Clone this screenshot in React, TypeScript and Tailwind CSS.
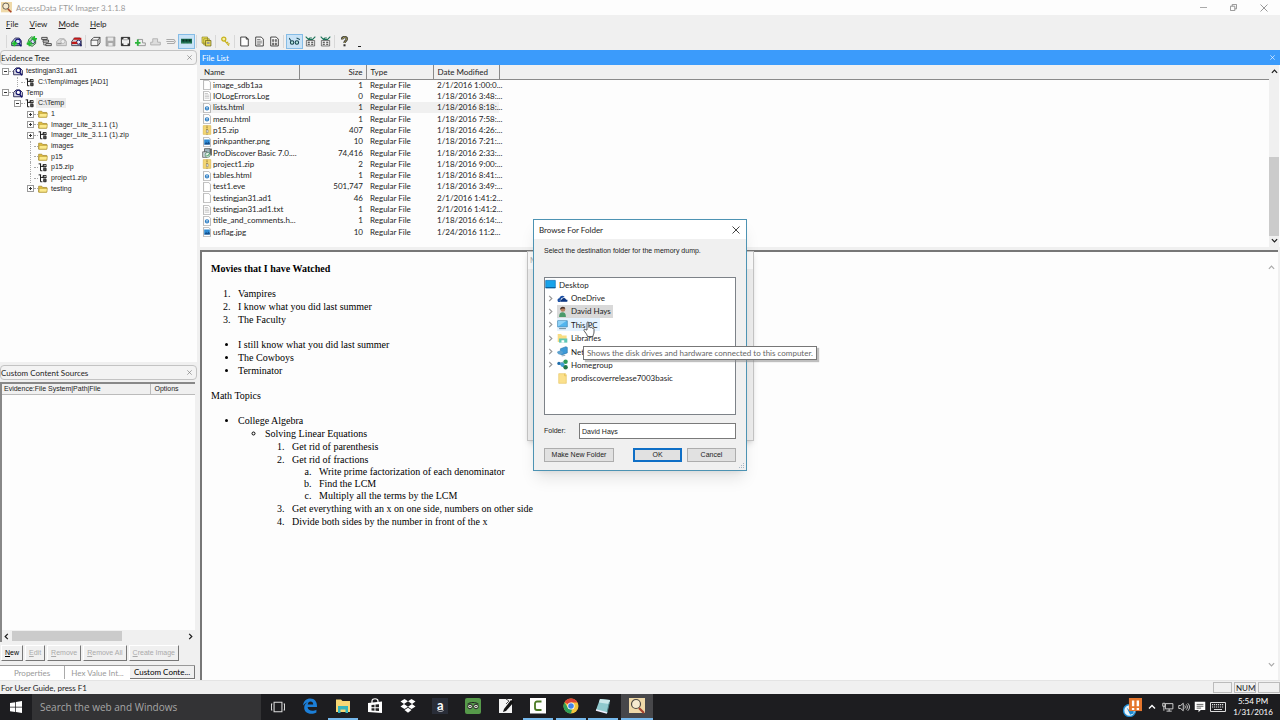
import type { ReactNode } from 'react';
import clsx from 'clsx';

const menus = ['File', 'View', 'Mode', 'Help'];

const files = [
  { icon: 'doc', name: 'image_sdb1aa', size: '1', date: '2/1/2016 1:00:0...' },
  { icon: 'text', name: 'IOLogErrors.Log', size: '0', date: '1/18/2016 3:48:...' },
  { icon: 'html', name: 'lists.html', size: '1', date: '1/18/2016 8:18:...', selected: true },
  { icon: 'html', name: 'menu.html', size: '1', date: '1/18/2016 7:58:...' },
  { icon: 'zip', name: 'p15.zip', size: '407', date: '1/18/2016 4:26:...' },
  { icon: 'image', name: 'pinkpanther.png', size: '10', date: '1/18/2016 7:21:...' },
  { icon: 'setup', name: 'ProDiscover Basic 7.0....', size: '74,416', date: '1/18/2016 2:33:...' },
  { icon: 'zip', name: 'project1.zip', size: '2', date: '1/18/2016 9:00:...' },
  { icon: 'html', name: 'tables.html', size: '1', date: '1/18/2016 8:41:...' },
  { icon: 'doc', name: 'test1.eve', size: '501,747', date: '1/18/2016 3:49:...' },
  { icon: 'doc', name: 'testingjan31.ad1', size: '46', date: '2/1/2016 1:41:2...' },
  { icon: 'text', name: 'testingjan31.ad1.txt', size: '1', date: '2/1/2016 1:41:2...' },
  { icon: 'html', name: 'title_and_comments.h...', size: '1', date: '1/18/2016 6:14:...' },
  { icon: 'image', name: 'usflag.jpg', size: '10', date: '1/24/2016 11:2...' },
];

const evidence = [
  { depth: 0, box: '-', icon: 'evidence', label: 'testingjan31.ad1' },
  { depth: 1, box: '', icon: 'branch', label: 'C:\\Temp\\images [AD1]' },
  { depth: 0, box: '-', icon: 'evidence', label: 'Temp' },
  { depth: 1, box: '-', icon: 'branch', label: 'C:\\Temp', selected: true },
  { depth: 2, box: '+', icon: 'folder', label: '1' },
  { depth: 2, box: '+', icon: 'folder', label: 'Imager_Lite_3.1.1 (1)' },
  { depth: 2, box: '+', icon: 'branch', label: 'Imager_Lite_3.1.1 (1).zip' },
  { depth: 2, box: '', icon: 'folder', label: 'images' },
  { depth: 2, box: '', icon: 'folder', label: 'p15' },
  { depth: 2, box: '', icon: 'branch', label: 'p15.zip' },
  { depth: 2, box: '', icon: 'branch', label: 'project1.zip' },
  { depth: 2, box: '+', icon: 'folder', label: 'testing' },
];

const depthClass = ['pl-[2px]', 'pl-[14px]', 'pl-[27px]'];

const places = [
  { icon: 'onedrive', label: 'OneDrive', open: true },
  { icon: 'user', label: 'David Hays', open: true, selected: true },
  { icon: 'pc', label: 'This PC', open: true, hover: true },
  { icon: 'libraries', label: 'Libraries', open: true },
  { icon: 'network', label: 'Network', open: true },
  { icon: 'homegroup', label: 'Homegroup', open: true },
  { icon: 'plainFolder', label: 'prodiscoverrelease7003basic', open: false },
];

const pageShape = <path d="M2.5.5h8l3 3v12h-11z" fill="#fff" stroke="#8b8b8b" />;

const drawings: Record<string, ReactNode> = {
  /* file types */
  doc: pageShape,
  text: (
    <>
      {pageShape}
      <path d="M4.5 4h5M4.5 6.5h7M4.5 9h7M4.5 11.5h7" stroke="#aaa" />
    </>
  ),
  html: (
    <>
      {pageShape}
      <circle cx="8" cy="8.5" r="2.6" fill="none" stroke="#2f7fc4" strokeWidth="1.8" />
      <path d="M6 8.6h5" stroke="#2f7fc4" strokeWidth="1.2" />
    </>
  ),
  zip: (
    <>
      <path d="M2 1h12v14H2z" fill="#f3d673" stroke="#d9b64c" />
      <path d="M8 1v14" stroke="#8a7434" strokeWidth="2" strokeDasharray="1.5 1.2" />
      <path d="M7 8h3v4H7z" fill="#ddd" stroke="#777" strokeWidth=".6" />
    </>
  ),
  image: (
    <>
      {pageShape}
      <path d="M3.5 4h9v8h-9z" fill="#2c8ad4" />
      <path d="M3.5 12l3-4 2 2 2-3 2 3v2z" fill="#144f8c" />
    </>
  ),
  setup: (
    <>
      <path d="M4 1h9v8H4z" fill="#9fb6bd" stroke="#333" />
      <path d="M1 6h7v9H1z" fill="#c7d3d8" stroke="#444" />
      <path d="M14.500 1v11" stroke="#000" strokeWidth="1.6" />
      <circle cx="9" cy="11" r="4" fill="#e6efe8" stroke="#3b7a58" />
      <path d="M7 11l2 2 3-4" fill="none" stroke="#2f9a57" strokeWidth="1.500" />
    </>
  ),
  /* evidence tree */
  evidence: (
    <>
      <path d="M1 7l4-4h6l4 4v7H1z" fill="#d9d9e6" stroke="#1b1b4d" strokeWidth="1.4" />
      <circle cx="8.500" cy="7" r="3.500" fill="#fff" stroke="#10106a" strokeWidth="1.8" />
      <path d="M10.500 10l4 5" stroke="#10106a" strokeWidth="2.400" />
    </>
  ),
  branch: (
    <>
      <path d="M1 3h4M4 3v11h3M4 7h4" fill="none" stroke="#111" strokeWidth="1.500" />
      <path d="M8 4h5v4H8zM9 10h4v4H9z" fill="#555" stroke="#111" strokeWidth="1.200" />
      <path d="M10 5.500h3" stroke="#fff" />
    </>
  ),
  folder: (
    <>
      <path d="M1 13V3.500h5l1.500 2H14V13z" fill="#e3bf3e" stroke="#94771a" />
      <path d="M1.500 13l.5-6h13l-1 6z" fill="#fbe98c" stroke="#a98a23" strokeWidth=".8" />
    </>
  ),
  /* places in the folder picker */
  desktop: (
    <>
      <path d="M1 2h14v11H1z" fill="#17a3ea" stroke="#0b6fb3" />
      <path d="M1 12.500h14" stroke="#075a95" strokeWidth="1.400" />
    </>
  ),
  onedrive: (
    <>
      <path d="M1 12c-1-3 1-4.500 2.500-4.300C4 4 8.500 2.500 11 5.500L6 8v5H2z" fill="#1b4fa3" />
      <path d="M6 13c-2.500-1-1.500-4 1-4 1-3 5-3 6 0 3 0 3.500 4 1 4z" fill="#0b3580" stroke="#fff" strokeWidth=".6" />
    </>
  ),
  user: (
    <>
      <path d="M3 16c0-5 2-7 5-7s5 2 5 7z" fill="#4a9a6b" />
      <circle cx="8.500" cy="5" r="3.500" fill="#b98262" />
      <path d="M4.500 5c0-5 7.500-5 7.500-1L8 3.500z" fill="#4b3328" />
    </>
  ),
  pc: (
    <>
      <path d="M1 2.500h14v9H1z" fill="#52b5ef" stroke="#4283ae" />
      <path d="M1.500 11l12-8H1.500z" fill="#8fd2f7" />
      <path d="M3 14h10" stroke="#6f8b9c" strokeWidth="1.500" />
    </>
  ),
  libraries: (
    <>
      <path d="M1 1.500h5l1.500 2H14V13H1z" fill="#f8dd83" />
      <path d="M3 8h12v6H3z" fill="#5fc7b4" />
      <path d="M6.500 14v-3.500h4V14z" fill="#fff" />
    </>
  ),
  network: (
    <>
      <path d="M5 4l8-3 2 1v8l-8 3-2-1z" fill="#3d9ad8" stroke="#256c9f" strokeWidth=".8" />
      <path d="M0 9c2-3 6-3 9 0-2 4-7 5-9 0z" fill="#5ea2cf" />
      <path d="M7 14.500l5-1" stroke="#8fa5b5" strokeWidth="1.400" />
    </>
  ),
  homegroup: (
    <>
      <path d="M3 6.500l9-3M3 6.500l9 6" stroke="#2c6d9b" />
      <circle cx="2.800" cy="6.500" r="2.400" fill="#1e6cab" />
      <circle cx="8" cy="8.500" r="3" fill="#3f9fd6" />
      <circle cx="12.500" cy="4" r="3.200" fill="#2c9c58" />
      <circle cx="12.500" cy="12" r="3.200" fill="#237848" />
    </>
  ),
  plainFolder: (
    <>
      <path d="M2.500 1h10l1 2v12h-11z" fill="#fbe08c" stroke="#e8c769" />
      <path d="M11 1v3h2.500" fill="none" stroke="#e2bb52" />
    </>
  ),
  /* toolbar */
  addEvidence: (
    <>
      <path d="M1 9l5-6h6l3 4v7H1z" fill="#c8cfe6" stroke="#23234f" strokeWidth="1.300" />
      <circle cx="10" cy="8" r="3.500" fill="#dfe6ff" stroke="#14147a" strokeWidth="1.600" />
      <path d="M12 11l3 4" stroke="#14147a" strokeWidth="2" />
      <path d="M5 7v8M1 11h8" stroke="#1fc02f" strokeWidth="2.800" />
    </>
  ),
  addAll: (
    <>
      <path d="M4 5l4-4 6 3v7l-5 4-7-3z" fill="#a9d8ac" stroke="#1d6d2a" strokeWidth="1.200" />
      <circle cx="10" cy="8" r="3" fill="#dfe6ff" stroke="#23234f" strokeWidth="1.200" />
      <path d="M5 7v8M1 11h8M12 0v8M8 4h8" stroke="#1fc02f" strokeWidth="2.400" />
    </>
  ),
  mount: (
    <>
      <path d="M1 2h8v3H1zM3 6h8v3H3zM7 11h8v3H7z" fill="#ddd" stroke="#333" strokeWidth="1.200" />
      <path d="M4 9v4h3" fill="none" stroke="#333" />
    </>
  ),
  removeGray: (
    <>
      <path d="M1 8l4-4h7l3 4v6H1z" fill="#ddd" stroke="#aaa" strokeWidth="1.300" />
      <circle cx="10" cy="8" r="3" fill="#eee" stroke="#aaa" />
      <path d="M2 11h6" stroke="#999" strokeWidth="2" />
    </>
  ),
  removeAll: (
    <>
      <path d="M1 8l4-5h8l2 4v7H1z" fill="#ccc" stroke="#33334d" strokeWidth="1.200" />
      <circle cx="11" cy="9" r="3" fill="#eef" stroke="#222266" strokeWidth="1.400" />
      <path d="M1 10h8M4 4h11" stroke="#c01818" strokeWidth="3" />
      <path d="M13 11l2 4" stroke="#222266" strokeWidth="2" />
    </>
  ),
  diskImage: (
    <path d="M1.500 6l4-4h9v8l-3 4h-10zM1.500 6h10M11.500 6v8M14.500 2l-3 4" fill="#f6f6f6" stroke="#333" strokeWidth="1.200" />
  ),
  saveGray: (
    <>
      <path d="M1.500 1.500h13v13h-13z" fill="#aaa" stroke="#999" />
      <path d="M4 2h8v5H4zM5 10h6v4H5z" fill="#e9e9e9" />
    </>
  ),
  film: (
    <>
      <path d="M2 2h12v12H2z" fill="#eee" stroke="#222" strokeWidth="1.400" />
      <path d="M2 2h3v3H2zM11 2h3v3h-3zM2 11h3v3H2zM11 11h3v3h-3z" fill="#333" />
      <path d="M5 5.500h6" stroke="#888" />
    </>
  ),
  exportGreen: (
    <>
      <path d="M4 5h7v5h4v4H4z" fill="#eee" stroke="#888" strokeWidth="1.200" />
      <path d="M4 5v9M0 10h8" stroke="#2bb53a" strokeWidth="2.600" />
    </>
  ),
  exportGray: <path d="M4 4h7v5h4v4H1V9h3z" fill="#ddd" stroke="#aaa" strokeWidth="1.200" />,
  hashGray: <path d="M2 5h11l2 3-2 3H3M2 8h11" fill="none" stroke="#aaa" strokeWidth="1.500" />,
  memory: (
    <>
      <path d="M0 4h16v7H0z" fill="#176b4c" />
      <path d="M2 5h3v3H2zM6.500 5h3v3h-3zM11 5h3v3h-3z" fill="#0b2f25" />
      <path d="M0 10.500h16" stroke="#8ab49a" strokeDasharray="1 1" />
    </>
  ),
  stack: (
    <>
      <path d="M1.500 1.500h8v9h-8zM4 4h8v9H4z" fill="#f3e65b" stroke="#8a8220" />
      <path d="M6.500 6.500h8v8h-8z" fill="#e6d85a" stroke="#5f5911" />
      <path d="M8.500 8.500h4v3h-4z" fill="#999" />
    </>
  ),
  key: (
    <>
      <circle cx="5.500" cy="4.500" r="3" fill="#f7f0a2" stroke="#c7b21d" strokeWidth="1.800" />
      <path d="M7 7l6 7M9 10l3-1M11 12l3-1" stroke="#c7b21d" strokeWidth="1.800" />
    </>
  ),
  page: <path d="M2.500 1.500h8l3 3v10h-11zM10.500 1.500v3h3" fill="#fff" stroke="#222" strokeWidth="1.200" />,
  pageText: (
    <>
      <path d="M2.500 1.500h8l3 3v10h-11z" fill="#fff" stroke="#222" strokeWidth="1.200" />
      <path d="M4.500 5h5M4.500 7.500h7M4.500 10h7M4.500 12h5" stroke="#444" />
    </>
  ),
  pageHex: (
    <>
      <path d="M2.500 1.500h8l3 3v10h-11z" fill="#fff" stroke="#222" strokeWidth="1.200" />
      <path d="M5 5h2v3H5zM9 5h2v3H9zM5 10h2v3H5zM9 10h2v3H9z" fill="#777" stroke="#333" strokeWidth=".6" />
    </>
  ),
  glasses: (
    <>
      <path d="M0 3l3 4M11 3l5 2" stroke="#174c58" strokeWidth="1.500" />
      <circle cx="4.500" cy="9.500" r="2.500" fill="#b7e6e0" stroke="#123f4a" strokeWidth="1.500" />
      <circle cx="11.500" cy="9.500" r="2.500" fill="#b7e6e0" stroke="#123f4a" strokeWidth="1.500" />
    </>
  ),
  glassesText: (
    <>
      <path d="M2 6.500h12v8H2z" fill="#eee" stroke="#444" />
      <path d="M4 9h3M9 9h3M4 12h3M9 12h3" stroke="#333" strokeWidth="1.500" />
      <path d="M1 1l4 4h6l4-4M5 5l2-2h3" fill="none" stroke="#1c7358" strokeWidth="1.600" />
    </>
  ),
  help: (
    <>
      <path d="M4.500 5c0-4.500 7-4.500 7-.5C11.500 7 8 7 8 10" fill="none" stroke="#333" strokeWidth="3.400" />
      <path d="M4.500 5c0-4.500 7-4.500 7-.5C11.500 7 8 7 8 10" fill="none" stroke="#e8d970" strokeWidth="1" />
      <path d="M6.500 12h3v3h-3z" fill="#333" />
    </>
  ),
  magnifier: (
    <>
      <path d="M0 0h16v15H0z" fill="#efd9a8" />
      <circle cx="7" cy="6" r="4.500" fill="#f6ead0" stroke="#4f4a43" strokeWidth="1.200" />
      <path d="M10 10l5 5" stroke="#a7432c" strokeWidth="2.200" />
    </>
  ),
  /* taskbar */
  windows: <path d="M0 2.500l7-1v6H0zM8 1.300L16 0v7.500H8zM0 8.500h7v6l-7-1zM8 8.500h8V16l-8-1.300z" fill="#fff" />,
  taskView: (
    <path d="M3.500 2.500h9v11h-9zM1.500 4.500h-1v7h1M14.500 4.500h1v7h-1" fill="none" stroke="#ddd" strokeWidth="1.200" />
  ),
  edge: (
    <path d="M1 7.500C1.500 3 4.500.5 8.300.5c4.400 0 6.900 3 6.700 8.500H5.600c.2 2.600 2.200 3.800 4.700 3.800 1.500 0 3-.4 4.100-1.100v2.800c-1.500.9-3.200 1.300-5 1.300-4.600 0-7.200-2.600-7.200-6 0-2.400 1.200-4.300 3.500-5.500C3.900 5 2.300 6 1 7.500zM5.700 6.500h5.500c0-1.900-.9-2.900-2.600-2.900-1.600 0-2.600 1.100-2.900 2.900z" fill="#1c7fd8" fillRule="evenodd" />
  ),
  explorer: (
    <>
      <path d="M1 1.500h5l1.500 1.500H15v11H1z" fill="#f7d774" />
      <path d="M3 8h10v7h-2.500v-3.500h-5V15H3z" fill="#35b5bc" />
    </>
  ),
  store: (
    <>
      <path d="M1 5l14-1.500V15L1 14z" fill="#fff" />
      <path d="M5 5V3c0-3 6-3 6 0v1.500" fill="none" stroke="#fff" strokeWidth="1.200" />
      <path d="M4.500 7l3-.3v2.600h-3zM8.500 6.600l3.500-.3v3H8.500zM4.500 10.200h3v2.600l-3-.2zM8.500 10.200H12v2.900l-3.500-.3z" fill="#222" />
    </>
  ),
  dropbox: (
    <path d="M4.500 1L8 3.300 4 6 .5 3.500zM11.500 1L8 3.300 12 6l3.500-2.500zM.5 8.500L4 6l4 2.700L4.500 11zM15.500 8.500L12 6 8 8.700l3.500 2.300zM4.500 12L8 9.700l3.500 2.300L8 14.700z" fill="#fff" />
  ),
  tripadvisor: (
    <>
      <rect width="16" height="16" rx="2" fill="#56994a" />
      <path d="M2.500 6c3-2 8-2 11 0" fill="none" stroke="#222" />
      <circle cx="5" cy="8.500" r="2.300" fill="#e8efdf" stroke="#222" />
      <circle cx="11" cy="8.500" r="2.300" fill="#e8efdf" stroke="#222" />
      <circle cx="5" cy="8.500" r=".8" fill="#222" />
      <circle cx="11" cy="8.500" r=".8" fill="#222" />
    </>
  ),
  inkpad: (
    <>
      <path d="M1 1h13v14H1z" fill="#f3f3f3" />
      <path d="M6 11l7-9 3 2-8 9-3 1z" fill="#111" />
      <path d="M8 1l3 2-3 3" fill="none" stroke="#555" />
    </>
  ),
  camtasia: (
    <>
      <path d="M0 0h16v15.500H0z" fill="#fff" />
      <path d="M11.500 3.500H7a2 2 0 00-2 2v4.500a2 2 0 002 2h4.500" fill="none" stroke="#4a7a22" strokeWidth="1.800" />
    </>
  ),
  chrome: (
    <>
      <circle cx="8" cy="8" r="7.500" fill="#f2c53c" />
      <path d="M8 8L1.500 4.200A7.500 7.500 0 0114.500 4.500H8z" fill="#dc4437" />
      <path d="M8 15.500A7.500 7.500 0 011.500 4.200L5 10l4 1.500z" fill="#2f9e58" />
      <circle cx="8" cy="8" r="3.600" fill="#fff" />
      <circle cx="8" cy="8" r="2.800" fill="#4285e8" />
    </>
  ),
  notepad: (
    <>
      <path d="M5 1l10 1-3 13-11-3z" fill="#8fc9cd" />
      <path d="M5 1l10 1-1 4L4 4.500z" fill="#cbe8ea" />
      <path d="M12 15l2.500-11" stroke="#4d7f84" />
      <path d="M1 12l11 3" stroke="#eef" strokeWidth="1.500" />
    </>
  ),
  tray: (
    <>
      <circle cx="5.500" cy="10.500" r="5" fill="#e9f4fb" stroke="#1f8bd0" strokeWidth="1.200" />
      <path d="M3 8l3 3h3v2l-3 1z" fill="#1f8bd0" />
      <path d="M5 0h11v11H5z" fill="#e5762d" />
      <path d="M8.500 2v5M12.500 2v5M8.500 8.500v1.500M12.500 8.500v1.500" stroke="#fff" strokeWidth="2" />
    </>
  ),
  wired: (
    <>
      <path d="M4.500 3.500h10v7h-10zM9.500 10.500v3M6 13.500h7" fill="none" stroke="#ddd" strokeWidth="1.200" />
      <path d="M1 3h3v4H1zM2.500 7v6" fill="#222" stroke="#ddd" strokeWidth="1.200" />
    </>
  ),
  volume: (
    <>
      <path d="M1 6h2.500L7 3v10L3.500 10H1z" fill="none" stroke="#ddd" strokeWidth="1.200" />
      <path d="M9 6c1 1 1 3 0 4M11 4.500c2 2 2 5 0 7M13 3c3 3 3 7 0 10" fill="none" stroke="#ddd" strokeWidth="1.200" />
    </>
  ),
  message: (
    <>
      <path d="M1 1h14v11H9l-3 3v-3H1z" fill="#fff" />
      <path d="M3.500 4.500h9M3.500 7h9M3.500 9.500h6" stroke="#333" />
    </>
  ),
  keyboard: (
    <>
      <path d="M.5 3.500h15v9H.5z" fill="none" stroke="#ddd" />
      <path d="M2 5.700h12M2 8h12" stroke="#ddd" strokeWidth="1.200" strokeDasharray="1.200 .8" />
      <path d="M4 10.500h8" stroke="#ddd" />
    </>
  ),
};

function Icon({ name, className = 'size-[11px]' }: { name: string; className?: string }) {
  return (
    <svg viewBox="0 0 16 16" className={clsx('shrink-0', className)} aria-hidden="true">
      {drawings[name]}
    </svg>
  );
}

function Chevron({ dir, className }: { dir: 'up' | 'down' | 'left' | 'right'; className?: string }) {
  const paths = { up: 'M1 5.500l3-3 3 3', down: 'M1 2.500l3 3 3-3', left: 'M5.500 1l-3 3 3 3', right: 'M2.500 1l3 3-3 3' };
  return (
    <svg viewBox="0 0 8 8" className={clsx('size-[7px] shrink-0', className)} aria-hidden="true">
      <path d={paths[dir]} fill="none" stroke="currentColor" strokeWidth="1.400" />
    </svg>
  );
}

function Cross({ className }: { className?: string }) {
  return (
    <svg viewBox="0 0 8 8" className={clsx('shrink-0', className)} aria-hidden="true">
      <path d="M.5.5l7 7M7.500.5l-7 7" stroke="currentColor" strokeWidth="1" />
    </svg>
  );
}

export default function App() {
  return (
    <div className="relative flex h-screen flex-col overflow-hidden bg-[#f0f0f0] font-['Lato',sans-serif] text-[8px] leading-3 text-[#1c1c1c]">
      <TitleBar />
      <nav className="flex h-[18px] shrink-0 items-center gap-[11px] pl-[6px] text-[#222]">
        {menus.map((menu) => (
          <button key={menu}>
            <span className="underline">{menu[0]}</span>
            {menu.slice(1)}
          </button>
        ))}
      </nav>
      <Toolbar />

      <div className="flex min-h-0 flex-1">
        <aside className="flex w-[197px] shrink-0 flex-col">
          <EvidenceTree />
          <ContentSources />
        </aside>
        <main className="ml-[3px] flex min-w-0 flex-1 flex-col">
          <FileList />
          <Preview />
        </main>
      </div>

      <footer className="flex h-[14px] shrink-0 items-center gap-[2px] border-t border-[#e4e4e4] pl-px">
        <span className="flex-1">For User Guide, press F1</span>
        <span className="h-[11px] w-[19px] border border-[#bbb]" />
        <span className="h-[11px] w-[22px] border border-[#bbb] pl-px leading-[10px]">NUM</span>
        <span className="h-[11px] w-[22px] border border-[#bbb]" />
      </footer>
      <Taskbar />
      <BrowseDialog />
    </div>
  );
}

function TitleBar() {
  return (
    <header className="flex h-[15px] shrink-0 items-center bg-[#fdfdfd] pl-px text-[#999]">
      <Icon name="magnifier" className="size-[11px]" />
      <h1 className="flex-1 pl-[4px]">AccessData FTK Imager 3.1.1.8</h1>
      <button aria-label="Minimize" className="flex w-[30px] justify-center">
        <span className="h-px w-[7px] bg-[#aaa]" />
      </button>
      <button aria-label="Restore" className="flex w-[30px] justify-center">
        <svg viewBox="0 0 8 8" className="size-[7px]" aria-hidden="true">
          <path d="M.5 2.500h5v5h-5zM2.500 2.500v-2h5v5h-2" fill="none" stroke="#888" />
        </svg>
      </button>
      <button aria-label="Close" className="flex w-[32px] justify-center">
        <Cross className="size-[8px]" />
      </button>
    </header>
  );
}

const toolGroups = [
  ['addEvidence', 'addAll', 'mount', 'removeGray', 'removeAll'],
  ['diskImage', 'saveGray', 'film', 'exportGreen', 'exportGray', 'hashGray', 'memory'],
  ['stack'],
  ['key'],
  ['page', 'pageText', 'pageHex'],
  ['glasses', 'glassesText', 'glassesText'],
  ['help'],
];

function Toolbar() {
  return (
    <div className="flex h-[17px] shrink-0 items-center pl-[5px]">
      {toolGroups.map((group, i) => (
        <div key={i} className="flex items-center">
          <span className="mr-[2px] ml-px h-[13px] w-px bg-[#d8d8d8]" />
          {group.map((tool, j) => {
            const active = tool === 'memory' || tool === 'glasses';
            return (
              <button
                key={j}
                aria-label={tool}
                className={clsx(
                  'flex h-[15px] items-center justify-center',
                  active ? 'w-[17px] border border-[#85bce6] bg-[#c9e3f7]' : 'w-[15px]'
                )}
              >
                <Icon name={tool} />
              </button>
            );
          })}
        </div>
      ))}
      <span className="mt-[9px] ml-[6px] h-px w-[3px] bg-[#222]" />
    </div>
  );
}

function PanelHeader({ title }: { title: string }) {
  return (
    <div className="flex h-[15px] shrink-0 items-center justify-between rounded-sm border border-[#c3c3c3] bg-[#f3f3f3] pr-[4px]">
      <h2>{title}</h2>
      <button aria-label={`Close ${title}`}>
        <Cross className="size-[5px] text-[#777]" />
      </button>
    </div>
  );
}

function EvidenceTree() {
  return (
    <section className="flex h-[315px] shrink-0 flex-col">
      <PanelHeader title="Evidence Tree" />
      <div className="mb-[3px] flex-1 bg-[#fdfdfd] pt-px">
        <ul className="flex h-[128px] flex-col font-['Liberation_Sans',sans-serif] text-[7px]">
          {evidence.map((node) => (
            <li key={node.label} className={clsx('flex flex-1 items-center', depthClass[node.depth])}>
              {node.box ? (
                <span className="relative flex size-[7px] items-center justify-center border border-[#999] bg-white">
                  <span className="h-px w-[3px] bg-[#333]" />
                  {node.box === '+' && <span className="absolute h-[3px] w-px bg-[#333]" />}
                </span>
              ) : (
                <span className="ml-[3px] h-[10px] w-[4px] border-l border-dotted border-[#aaa]" />
              )}
              <span className="w-[4px] border-t border-dotted border-[#aaa]" />
              <Icon name={node.icon} className="size-[10px]" />
              <span className={clsx('ml-px px-[2px] leading-[10px]', node.selected && 'bg-[#ececec]')}>
                {node.label}
              </span>
            </li>
          ))}
        </ul>
      </div>
    </section>
  );
}

const sourceActions = ['New', 'Edit', 'Remove', 'Remove All', 'Create Image'];
const tabs = ['Properties', 'Hex Value Int...', 'Custom Conte...'];

function ContentSources() {
  return (
    <section className="flex min-h-0 flex-1 flex-col">
      <PanelHeader title="Custom Content Sources" />
      <div className="mt-[2px] mr-[2px] flex flex-1 flex-col border-t-2 border-l-2 border-[#888] bg-[#fdfdfd]">
        <table className="w-full font-['Liberation_Sans',sans-serif] text-[7px]">
          <thead>
            <tr className="h-[10px] bg-[#f0f0f0] leading-[10px]">
              <th className="border-r border-b border-[#bbb] pl-[2px] text-left font-normal">Evidence:File System|Path|File</th>
              <th className="w-[45px] border-b border-[#bbb] pl-[4px] text-left font-normal">Options</th>
            </tr>
          </thead>
        </table>
        <div className="mt-auto flex h-[12px] items-center bg-[#f0f0f0] px-px">
          <Chevron dir="left" />
          <span className="ml-[2px] h-[10px] w-[110px] bg-[#cbcbcb]" />
          <Chevron dir="right" className="ml-auto" />
        </div>
      </div>
      <div className="mt-[3px] flex gap-[2px] pl-px font-['Liberation_Sans',sans-serif] text-[7px]">
        {sourceActions.map((action, i) => (
          <button
            key={action}
            disabled={i > 0}
            className="h-[16px] min-w-[20px] border border-t-white border-r-[#777] border-b-[#777] border-l-white px-[3px] first:text-black disabled:text-[#aaa]"
          >
            <span className="underline">{action[0]}</span>
            {action.slice(1)}
          </button>
        ))}
      </div>
      <div role="tablist" className="mt-[4px] mr-[2px] grid h-[15px] shrink-0 grid-cols-3 border-t border-[#999] bg-white">
        {tabs.map((tab, i) => (
          <button
            key={tab}
            role="tab"
            aria-selected={i === 2}
            className={clsx(
              'h-[13px] overflow-hidden whitespace-nowrap',
              i === 2 ? 'border-r border-b border-[#777] bg-[#f0f0f0] text-black' : 'text-[#999]',
              i === 0 && 'border-r border-[#aaa]'
            )}
          >
            {tab}
          </button>
        ))}
      </div>
    </section>
  );
}

function FileList() {
  return (
    <section className="flex h-[200px] shrink-0 flex-col">
      <div className="flex h-[15px] shrink-0 items-center justify-between bg-[#3b9bfb] pr-[5px] pl-[2px] text-white">
        <h2>File List</h2>
        <button aria-label="Close File List">
          <Cross className="size-[5px]" />
        </button>
      </div>
      <div className="mb-[3px] flex flex-1 bg-[#fdfdfd]">
        <div className="flex-1">
          <table className="h-[173px] w-full table-fixed">
            <thead>
              <tr className="h-[14px] bg-[#f0f0f0] text-left">
                <th className="w-[99px] border-r border-b border-[#8a8a8a] pl-[4px] font-normal">Name</th>
                <th className="w-[67px] border-r border-b border-[#8a8a8a] pr-[3px] text-right font-normal">Size</th>
                <th className="w-[67px] border-r border-b border-[#8a8a8a] pl-[4px] font-normal">Type</th>
                <th className="w-[66px] border-r border-b border-[#8a8a8a] pl-[4px] font-normal">Date Modified</th>
                <th className="border-b border-[#8a8a8a]" aria-label="Filler" />
              </tr>
            </thead>
            <tbody className="leading-[11px] whitespace-nowrap">
              {files.map((file) => (
                <tr key={file.name} className="h-[11px]">
                  <td className={clsx('pl-[2px]', file.selected && 'bg-[#f0f0f0]')}>
                    <span className="flex items-center gap-px">
                      <Icon name={file.icon} className="size-[10px]" />
                      {file.name}
                    </span>
                  </td>
                  <td className={clsx('pr-[3px] text-right', file.selected && 'bg-[#f0f0f0]')}>{file.size}</td>
                  <td className={clsx('pl-[4px]', file.selected && 'bg-[#f0f0f0]')}>Regular File</td>
                  <td className={clsx('pl-[4px]', file.selected && 'bg-[#f0f0f0]')}>{file.date}</td>
                  <td />
                </tr>
              ))}
            </tbody>
          </table>
        </div>
        <div className="mr-px flex w-[10px] flex-col items-center bg-[#f0f0f0] py-[3px]">
          <Chevron dir="up" />
          <span className="mt-auto mb-px h-[79px] w-full bg-[#cbcbcb]" />
          <Chevron dir="down" />
        </div>
      </div>
    </section>
  );
}

const numbered = "[&>li::marker]:content-[counter(list-item)'.___']";
const lettered = "[&>li::marker]:content-[counter(list-item,lower-alpha)'.___']";

function Preview() {
  return (
    <article className="mr-[2px] flex flex-1 border-t-2 border-l-2 border-[#777] bg-[#fdfdfd] font-['Liberation_Serif',serif] text-[10px] leading-[13px] text-black">
      <div className="flex-1 pt-[10px] pl-[9px]">
        <h3 className="font-bold">Movies that I have Watched</h3>
        <ol className={clsx('mt-[12px] list-decimal pl-[27px]', numbered)}>
          <li>Vampires</li>
          <li>I know what you did last summer</li>
          <li>The Faculty</li>
        </ol>
        <ul className="mt-[12px] list-disc pl-[27px]">
          <li>I still know what you did last summer</li>
          <li>The Cowboys</li>
          <li>Terminator</li>
        </ul>
        <p className="mt-[12px]">Math Topics</p>
        <ul className="mt-[12px] list-disc pl-[27px]">
          <li>
            College Algebra
            <ul className="list-[circle] pl-[27px]">
              <li>
                Solving Linear Equations
                <ol className={clsx('list-decimal pl-[27px]', numbered)}>
                  <li>Get rid of parenthesis</li>
                  <li>
                    Get rid of fractions
                    <ol className={clsx('list-[lower-alpha] pl-[27px] leading-3', lettered)}>
                      <li>Write prime factorization of each denominator</li>
                      <li>Find the LCM</li>
                      <li>Multiply all the terms by the LCM</li>
                    </ol>
                  </li>
                  <li>Get everything with an x on one side, numbers on other side</li>
                  <li>Divide both sides by the number in front of the x</li>
                </ol>
              </li>
            </ul>
          </li>
        </ul>
      </div>
      <div className="flex flex-col justify-between py-[12px] pr-[3px] text-[#aaa]">
        <Chevron dir="up" />
        <Chevron dir="down" />
      </div>
    </article>
  );
}

const pinned = [
  { icon: 'edge' },
  { icon: 'explorer', running: true },
  { icon: 'store' },
  { icon: 'dropbox' },
  { icon: 'amazon' },
  { icon: 'tripadvisor' },
  { icon: 'inkpad' },
  { icon: 'camtasia', running: true },
  { icon: 'chrome', running: true },
  { icon: 'notepad', running: true },
  { icon: 'magnifier', running: true, active: true },
];

function Taskbar() {
  return (
    <div className="flex h-[26px] shrink-0 items-stretch bg-[#1d1d20] text-white">
      <button aria-label="Start" className="flex w-[32px] items-center justify-center">
        <Icon name="windows" className="size-[12px]" />
      </button>
      <input
        type="text"
        aria-label="Search"
        placeholder="Search the web and Windows"
        className="w-[229px] bg-[#333335] pl-[8px] font-['Open_Sans',sans-serif] text-[10px] placeholder:text-[#a6a6a6]"
      />
      <button aria-label="Task View" className="flex w-[34px] items-center justify-center">
        <Icon name="taskView" className="size-[14px]" />
      </button>
      <div className="flex w-[358px] justify-between">
        {pinned.map((app) => (
          <button
            key={app.icon}
            aria-label={app.icon}
            className={clsx(
              'flex items-center justify-center border-b-2',
              app.running ? 'border-[#76b9ed]' : 'border-transparent',
              app.active ? 'w-[32px] bg-[#47474a]' : 'w-[30px]'
            )}
          >
            {app.icon === 'amazon' ? (
              <span className="flex size-[16px] flex-col items-center justify-center bg-[#292d38] text-[13px] leading-[10px] font-bold">
                a
                <svg viewBox="0 0 10 3" className="h-[2px] w-[9px]" aria-hidden="true">
                  <path d="M0 0c3 3 7 3 10 0" fill="none" stroke="#fff" />
                </svg>
              </span>
            ) : (
              <Icon name={app.icon} className="size-[16px]" />
            )}
          </button>
        ))}
      </div>
      <div className="ml-auto flex items-center gap-[4px]">
        <Icon name="tray" className="size-[19px]" />
        <Chevron dir="up" className="mx-[2px] size-[8px]" />
        <Icon name="wired" className="size-[12px]" />
        <Icon name="volume" className="size-[12px]" />
        <Icon name="message" className="size-[12px]" />
        <Icon name="keyboard" className="size-[16px]" />
        <div className="w-[50px] pr-[4px] text-center leading-[11px]">
          <p>5:54 PM</p>
          <p>1/31/2016</p>
        </div>
      </div>
    </div>
  );
}

function BrowseDialog() {
  return (
    <>
      {/* Memory capture window underneath */}
      <div className="absolute top-[251px] left-[527px] h-[190px] w-[227px] border border-[#c4c4c4] bg-[#ededed] shadow-md">
        <p className="h-[17px] bg-[#fafafa] pl-[2px] leading-[17px] text-[#aaa]">Memory Capture</p>
      </div>

      <div
        role="dialog"
        aria-label="Browse For Folder"
        className="absolute top-[219px] left-[533px] w-[214px] border border-[#4d93b3] bg-[#f0f0f0] shadow-lg"
      >
        <div className="flex h-[19px] items-center justify-between bg-white pr-[6px] pl-[5px]">
          <h2>Browse For Folder</h2>
          <button aria-label="Close dialog">
            <Cross className="size-[8px] text-[#444]" />
          </button>
        </div>
        <div className="px-[10px] pt-[6px] pb-[8px] font-['Liberation_Sans',sans-serif] text-[7px]">
          <p>Select the destination folder for the memory dump.</p>
          <div className="mt-[20px] h-[138px] border border-[#7d8288] bg-white">
            <ul className="flex h-[107px] flex-col font-['Lato',sans-serif] text-[8px]">
              <li className="flex flex-1 items-center gap-[3px]">
                <Icon name="desktop" />
                Desktop
              </li>
              {places.map((place) => (
                <li key={place.label} className="flex flex-1 items-center pl-[2px]">
                  <span className="flex w-[10px] text-[#999]">{place.open && <Chevron dir="right" />}</span>
                  <span
                    className={clsx(
                      'flex h-[13px] items-center gap-[3px] pr-[2px]',
                      place.selected && 'bg-[#d9d9d9]',
                      place.hover && 'bg-[#e5f3ff]'
                    )}
                  >
                    <Icon name={place.icon} />
                    {place.label}
                  </span>
                </li>
              ))}
            </ul>
          </div>
          <div className="mt-[8px] flex items-center">
            <label htmlFor="folder" className="w-[35px]">
              Folder:
            </label>
            <input
              id="folder"
              type="text"
              defaultValue="David Hays"
              className="h-[16px] min-w-0 flex-1 border border-[#7a7a7a] bg-white px-[2px]"
            />
          </div>
          <div className="mt-[9px] flex gap-[5px]">
            <button className="mr-auto h-[14px] w-[70px] border border-[#adadad] bg-[#e1e1e1] leading-3">Make New Folder</button>
            <button className="h-[14px] w-[49px] border-2 border-[#0f6fc6] bg-[#e1e1e1] leading-[10px]">OK</button>
            <button className="h-[14px] w-[49px] border border-[#adadad] bg-[#e1e1e1] leading-3">Cancel</button>
          </div>
        </div>
        <svg viewBox="0 0 6 6" className="absolute right-px bottom-px size-[6px]" aria-hidden="true">
          <path d="M4 0h1v1H4zM2 2h1v1H2zM4 2h1v1H4zM0 4h1v1H0zM2 4h1v1H2zM4 4h1v1H4z" fill="#a9b7c4" />
        </svg>
      </div>

      <div
        role="tooltip"
        className="absolute top-[346px] left-[583px] h-[14px] border border-[#777] bg-white px-[3px] leading-3 text-[#666] shadow-[2px_2px_1px_#8888]"
      >
        Shows the disk drives and hardware connected to this computer.
      </div>
      <svg viewBox="0 0 12 16" className="absolute top-[321px] left-[583px] h-[16px] w-[12px]" aria-hidden="true">
        <path
          d="M4 9V2c0-1.400 1.800-1.400 1.800 0v4.500c.6-.8 1.700-.6 1.800.3.600-.6 1.600-.4 1.700.5.700-.4 1.700 0 1.700.9V11c0 2-1 2.500-1 4.500H4.500C4 13 2 11.500 1 9.500c-.5-1.200 1-1.700 1.800-.7z"
          fill="#fff"
          stroke="#333"
          strokeWidth=".8"
        />
      </svg>
    </>
  );
}
